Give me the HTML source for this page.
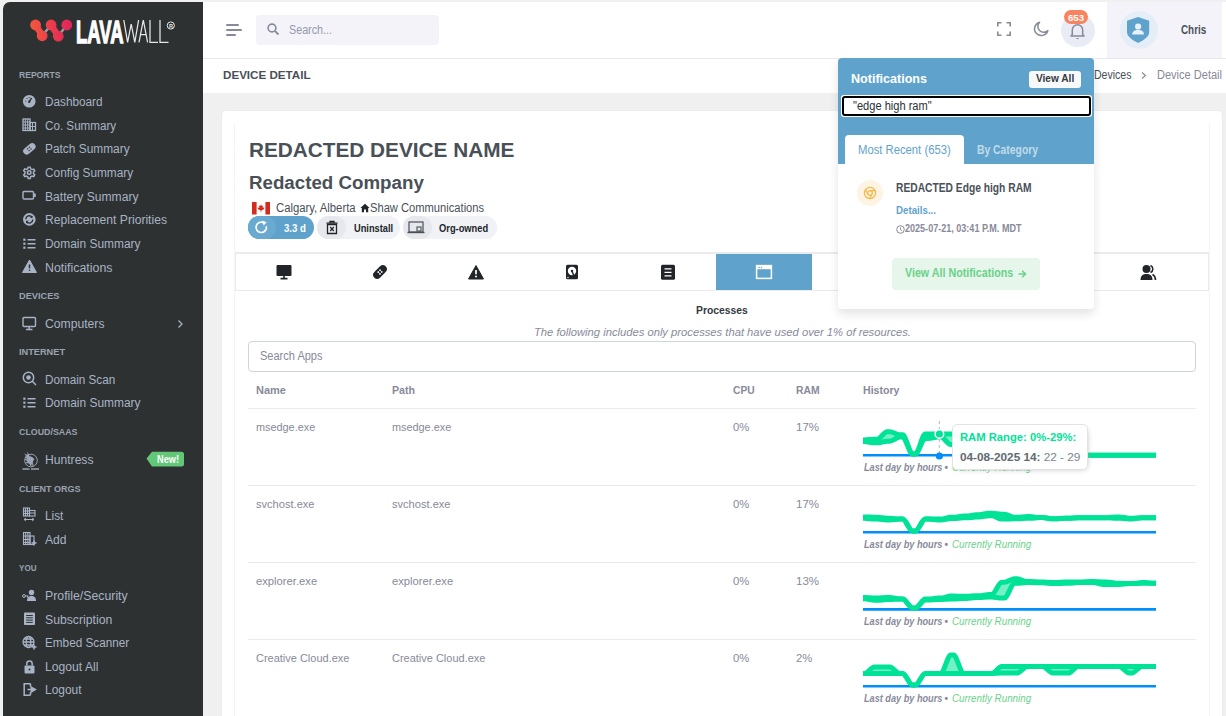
<!DOCTYPE html>
<html><head><meta charset="utf-8"><title>Device Detail</title>
<style>
html,body{margin:0;padding:0;}
body{width:1226px;height:716px;overflow:hidden;position:relative;background:#f1f1f1;font-family:"Liberation Sans", sans-serif;}
.b{position:absolute;box-sizing:border-box;}
.t{position:absolute;white-space:nowrap;}
svg.b{overflow:visible;}
</style></head><body>
<div class='b' style='left:3px;top:2px;width:200px;height:714px;background:#2d3131;border-top-left-radius:7px;'></div>
<svg class='b' style='left:28px;top:16px;' width='50' height='30' viewBox='0 0 50 30'>
<defs><linearGradient id="lg" gradientUnits="userSpaceOnUse" x1="2" x2="44" y1="0" y2="0"><stop offset="0" stop-color="#f4573c"/><stop offset="1" stop-color="#e0235c"/></linearGradient></defs>
<g stroke="#9aa0a3" stroke-width="2.4" fill="none"><path d="M14.2 19.6 L23.1 9 M30.3 20 L38.8 9"/></g>
<g stroke="url(#lg)" stroke-width="6.5" fill="none"><path d="M7.6 9 L14.2 19.6 M23.1 9 L30.3 20"/></g>
<g fill="url(#lg)">
<circle cx="7.6" cy="9" r="5.4"/><circle cx="14.2" cy="19.8" r="5.4"/><circle cx="23.1" cy="9" r="5.4"/><circle cx="30.3" cy="20.2" r="5.4"/><circle cx="38.8" cy="9" r="5.4"/>
</g></svg>
<div class='t' style='left:75.8px;top:17px;font-size:31.5px;line-height:31.5px;font-weight:700;font-style:normal;color:#ffffff;transform:scaleX(0.5859);transform-origin:0 0;-webkit-text-stroke:1.3px #ffffff;'>LAVA</div>
<svg class='b' style='left:123px;top:19px;' width='56' height='25' viewBox='0 0 56 25'><g stroke="#e8e8e8" stroke-width="1.25" fill="none" stroke-linejoin="miter">
<path d="M0.8 1 L4.6 23.4 L8.2 5 L11.8 23.4 L15.6 1"/>
<path d="M16 23.4 L20.3 1 L24.6 23.4 M17.6 15.5 H23"/>
<path d="M27 1 V23.4 H35"/>
<path d="M37 1 V23.4 H45.5"/>
</g><circle cx="47.8" cy="6.5" r="3.6" stroke="#e8e8e8" stroke-width="1" fill="none"/><text x="46.1" y="8.6" font-size="5.5" font-weight="700" fill="#e8e8e8" font-family="Liberation Sans">R</text></svg>
<div class='t' style='left:19.2px;top:71px;font-size:9px;line-height:9px;font-weight:700;font-style:normal;color:#9aa3b2;transform:scaleX(0.9514);transform-origin:0 0;'>REPORTS</div>
<div class='t' style='left:44.8px;top:96px;font-size:12px;line-height:12px;font-weight:400;font-style:normal;color:#a9b3c6;transform:scaleX(0.9809);transform-origin:0 0;'>Dashboard</div>
<svg class='b' style='left:22px;top:93.5px;' width='15' height='15' viewBox='0 0 15 15'><circle cx="7.2" cy="7.3" r="6.3" fill="#a9b3c6"/><path d="M7.2 7.6 L9.6 4" stroke="#2d3131" stroke-width="1.4"/><circle cx="7.2" cy="7.8" r="1.2" fill="#2d3131"/><g fill="#2d3131"><circle cx="3.8" cy="7" r=".6"/><circle cx="5" cy="4.5" r=".6"/><circle cx="7.2" cy="3.5" r=".6"/></g></svg>
<div class='t' style='left:44.8px;top:120px;font-size:12px;line-height:12px;font-weight:400;font-style:normal;color:#a9b3c6;transform:scaleX(0.9706);transform-origin:0 0;'>Co. Summary</div>
<svg class='b' style='left:22px;top:117.19999999999999px;' width='15' height='15' viewBox='0 0 15 15'><g fill="none" stroke="#a9b3c6" stroke-width="1.3"><rect x="1" y="2" width="7" height="11.5"/><rect x="8" y="5.5" width="5.5" height="8"/></g><g stroke="#a9b3c6" stroke-width="1"><path d="M3.3 2v11.5M5.7 2v11.5M1 5h7M1 8h7M1 11h7M10.5 5.5v8M8 9.5h5.5"/></g></svg>
<div class='t' style='left:44.8px;top:143px;font-size:12px;line-height:12px;font-weight:400;font-style:normal;color:#a9b3c6;transform:scaleX(0.9911);transform-origin:0 0;'>Patch Summary</div>
<svg class='b' style='left:22px;top:140.9px;' width='15' height='15' viewBox='0 0 15 15'><g transform="rotate(-40 7.5 8)"><rect x="0.5" y="4.3" width="14" height="7" rx="3.5" fill="#a9b3c6"/><g fill="#2d3131"><circle cx="6.2" cy="6.6" r=".7"/><circle cx="8.6" cy="6.6" r=".7"/><circle cx="6.2" cy="9" r=".7"/><circle cx="8.6" cy="9" r=".7"/></g></g></svg>
<div class='t' style='left:44.8px;top:167px;font-size:12px;line-height:12px;font-weight:400;font-style:normal;color:#a9b3c6;transform:scaleX(0.9869);transform-origin:0 0;'>Config Summary</div>
<svg class='b' style='left:22px;top:164.6px;' width='15' height='15' viewBox='0 0 15 15'><g transform="translate(1.1 1.1) scale(0.85)"><g fill="none" stroke="#a9b3c6" stroke-width="1.7"><circle cx="7.2" cy="7.5" r="2.1"/><path d="M6 1.2h2.4l.5 2 1.6.9 2-.6 1.2 2.1-1.5 1.4v1.8l1.5 1.4-1.2 2.1-2-.6-1.6.9-.5 2H6l-.5-2-1.6-.9-2 .6-1.2-2.1 1.5-1.4V6.8L.7 5.4 1.9 3.3l2 .6 1.6-.9z"/></g></g></svg>
<div class='t' style='left:44.8px;top:191px;font-size:12px;line-height:12px;font-weight:400;font-style:normal;color:#a9b3c6;transform:scaleX(1.0086);transform-origin:0 0;'>Battery Summary</div>
<svg class='b' style='left:22px;top:188.4px;' width='15' height='15' viewBox='0 0 15 15'><g fill="none" stroke="#a9b3c6" stroke-width="1.4"><rect x="1" y="3.5" width="10.5" height="7.5" rx="1"/></g><rect x="11.8" y="5.6" width="2" height="3.3" fill="#a9b3c6"/></svg>
<div class='t' style='left:44.8px;top:214px;font-size:12px;line-height:12px;font-weight:400;font-style:normal;color:#a9b3c6;transform:scaleX(1.0106);transform-origin:0 0;'>Replacement Priorities</div>
<svg class='b' style='left:22px;top:211.8px;' width='15' height='15' viewBox='0 0 15 15'><circle cx="7.3" cy="7.4" r="6.3" fill="#a9b3c6"/><g fill="none" stroke="#2d3131" stroke-width="1.4"><path d="M3.8 7.2a3.5 3.5 0 0 1 6.2-2.2M10.8 7.6a3.5 3.5 0 0 1-6.2 2.2"/></g><path d="M10.6 3.4v2.6H8z M4 11.4V8.8h2.6z" fill="#2d3131"/></svg>
<div class='t' style='left:44.8px;top:238px;font-size:12px;line-height:12px;font-weight:400;font-style:normal;color:#a9b3c6;transform:scaleX(0.9945);transform-origin:0 0;'>Domain Summary</div>
<svg class='b' style='left:22px;top:235.7px;' width='15' height='15' viewBox='0 0 15 15'><g fill="#a9b3c6"><rect x="1.3" y="2.6" width="2.2" height="2.2"/><rect x="1.3" y="6.6" width="2.2" height="2.2"/><rect x="1.3" y="10.6" width="2.2" height="2.2"/></g><g stroke="#a9b3c6" stroke-width="1.4"><path d="M5.5 3.7h8M5.5 7.7h8M5.5 11.7h8"/></g></svg>
<div class='t' style='left:44.8px;top:262px;font-size:12px;line-height:12px;font-weight:400;font-style:normal;color:#a9b3c6;transform:scaleX(1.0325);transform-origin:0 0;'>Notifications</div>
<svg class='b' style='left:22px;top:259.3px;' width='15' height='15' viewBox='0 0 15 15'><path d="M7.5 1 L14.5 13.5 H0.5Z" fill="#a9b3c6" stroke="#a9b3c6" stroke-width="1" stroke-linejoin="round"/><path d="M7.5 5.5v3.8" stroke="#2d3131" stroke-width="1.5"/><circle cx="7.5" cy="11.3" r=".8" fill="#2d3131"/></svg>
<div class='t' style='left:19.2px;top:292px;font-size:9px;line-height:9px;font-weight:700;font-style:normal;color:#9aa3b2;transform:scaleX(1.0249);transform-origin:0 0;'>DEVICES</div>
<div class='t' style='left:44.8px;top:318px;font-size:12px;line-height:12px;font-weight:400;font-style:normal;color:#a9b3c6;transform:scaleX(1.0138);transform-origin:0 0;'>Computers</div>
<svg class='b' style='left:22px;top:315.5px;' width='15' height='15' viewBox='0 0 15 15'><g fill="none" stroke="#a9b3c6" stroke-width="1.4"><rect x="1" y="1.5" width="12.5" height="9" rx="1"/></g><path d="M7.2 10.5v2.5M4 13.5h6.5" stroke="#a9b3c6" stroke-width="1.5"/></svg>
<svg class='b' style='left:176px;top:319px;' width='8' height='10' viewBox='0 0 8 10'><path d="M2.5 1.5 L6 5 L2.5 8.5" fill="none" stroke="#a9b3c6" stroke-width="1.3"/></svg>
<div class='t' style='left:19.2px;top:348px;font-size:9px;line-height:9px;font-weight:700;font-style:normal;color:#9aa3b2;transform:scaleX(1.0222);transform-origin:0 0;'>INTERNET</div>
<div class='t' style='left:44.8px;top:374px;font-size:12px;line-height:12px;font-weight:400;font-style:normal;color:#a9b3c6;transform:scaleX(0.9744);transform-origin:0 0;'>Domain Scan</div>
<svg class='b' style='left:22px;top:371.1px;' width='15' height='15' viewBox='0 0 15 15'><g fill="none" stroke="#a9b3c6" stroke-width="1.5"><circle cx="6.5" cy="6.5" r="5.2"/><path d="M10.3 10.3 L14 14"/></g><circle cx="6.5" cy="6.5" r="2.3" fill="#a9b3c6"/></svg>
<div class='t' style='left:44.8px;top:397px;font-size:12px;line-height:12px;font-weight:400;font-style:normal;color:#a9b3c6;transform:scaleX(0.9945);transform-origin:0 0;'>Domain Summary</div>
<svg class='b' style='left:22px;top:394.7px;' width='15' height='15' viewBox='0 0 15 15'><g fill="#a9b3c6"><rect x="1.3" y="2.6" width="2.2" height="2.2"/><rect x="1.3" y="6.6" width="2.2" height="2.2"/><rect x="1.3" y="10.6" width="2.2" height="2.2"/></g><g stroke="#a9b3c6" stroke-width="1.4"><path d="M5.5 3.7h8M5.5 7.7h8M5.5 11.7h8"/></g></svg>
<div class='t' style='left:19.2px;top:428px;font-size:9px;line-height:9px;font-weight:700;font-style:normal;color:#9aa3b2;transform:scaleX(0.9829);transform-origin:0 0;'>CLOUD/SAAS</div>
<div class='t' style='left:44.8px;top:454px;font-size:12px;line-height:12px;font-weight:400;font-style:normal;color:#a9b3c6;transform:scaleX(1.0098);transform-origin:0 0;'>Huntress</div>
<svg class='b' style='left:21.5px;top:451px;' width='18' height='20' viewBox='0 0 18 20'><circle cx="9" cy="9.5" r="6.3" fill="none" stroke="#a9b3c6" stroke-width="1" opacity="0.85"/><path d="M2 2.5 L5 6 L2.5 5.5 L5 8 L2 8.5 L5.5 10 L3.5 12 L7 12.5 L9 15.5 L10.5 11 L12.5 8 L10 6 L7.5 5 L5.5 0.5 L5.5 4Z" fill="#a9b3c6" opacity="0.9"/><path d="M9.5 6 L11 15" stroke="#a9b3c6" stroke-width="1.2" opacity="0.8"/><rect x="0.5" y="17" width="7" height="2" fill="#a9b3c6" opacity="0.65"/><rect x="9" y="17" width="8" height="2" fill="#a9b3c6" opacity="0.65"/></svg>
<svg class='b' style='left:146px;top:451px;' width='38' height='16' viewBox='0 0 38 16'><path d="M0.5 7.5 L6 0.8 H35.5 a2.5 2.5 0 0 1 2.5 2.5 V13 a2.5 2.5 0 0 1 -2.5 2.5 H6Z" fill="#62c878"/></svg>
<div class='t' style='left:156.5px;top:455px;font-size:10px;line-height:10px;font-weight:700;font-style:normal;color:#ffffff;transform:scaleX(0.9203);transform-origin:0 0;'>New!</div>
<div class='t' style='left:19.2px;top:485px;font-size:9px;line-height:9px;font-weight:700;font-style:normal;color:#9aa3b2;transform:scaleX(0.9997);transform-origin:0 0;'>CLIENT ORGS</div>
<div class='t' style='left:44.8px;top:510px;font-size:12px;line-height:12px;font-weight:400;font-style:normal;color:#a9b3c6;transform:scaleX(0.9846);transform-origin:0 0;'>List</div>
<svg class='b' style='left:22px;top:507.1px;' width='15' height='15' viewBox='0 0 15 15'><g fill="none" stroke="#a9b3c6" stroke-width="1.1"><rect x="1.5" y="1" width="6" height="8"/><rect x="7.5" y="3.5" width="5.5" height="5.5"/><path d="M3.5 1v8M5.5 1v8M1.5 4h6M1.5 6.5h6M7.5 6h5.5"/></g><path d="M2 12.5h10M2 12.5l1.8-1.3M2 12.5l1.8 1.3M12 12.5l-1.8-1.3M12 12.5l-1.8 1.3" stroke="#a9b3c6" stroke-width="1"/></svg>
<div class='t' style='left:44.8px;top:534px;font-size:12px;line-height:12px;font-weight:400;font-style:normal;color:#a9b3c6;transform:scaleX(1.0066);transform-origin:0 0;'>Add</div>
<svg class='b' style='left:22px;top:531.2px;' width='15' height='15' viewBox='0 0 15 15'><g fill="none" stroke="#a9b3c6" stroke-width="1.1"><rect x="1.5" y="1.5" width="6.5" height="12"/><rect x="8" y="5" width="4" height="8.5"/><path d="M3.7 1.5v12M5.9 1.5v12M1.5 5h6.5M1.5 8.5h6.5M1.5 11.5h6.5"/></g><path d="M12 9.5v5M9.5 12h5" stroke="#a9b3c6" stroke-width="1.5"/></svg>
<div class='t' style='left:19.2px;top:564px;font-size:9px;line-height:9px;font-weight:700;font-style:normal;color:#9aa3b2;transform:scaleX(0.8967);transform-origin:0 0;'>YOU</div>
<div class='t' style='left:44.8px;top:590px;font-size:12px;line-height:12px;font-weight:400;font-style:normal;color:#a9b3c6;transform:scaleX(1.0247);transform-origin:0 0;'>Profile/Security</div>
<svg class='b' style='left:22px;top:587.6px;' width='15' height='15' viewBox='0 0 15 15'><circle cx="9.5" cy="4.5" r="2.7" fill="#a9b3c6"/><path d="M5 13 C5 9 7 8 9.5 8 C12 8 14 9 14 13Z" fill="#a9b3c6"/><circle cx="2" cy="8" r="1.4" fill="none" stroke="#a9b3c6" stroke-width="1"/><path d="M3.4 8 H6.5 M5.5 8v1.5" stroke="#a9b3c6" stroke-width="1"/></svg>
<div class='t' style='left:44.8px;top:614px;font-size:12px;line-height:12px;font-weight:400;font-style:normal;color:#a9b3c6;transform:scaleX(1.0190);transform-origin:0 0;'>Subscription</div>
<svg class='b' style='left:22px;top:611.1px;' width='15' height='15' viewBox='0 0 15 15'><rect x="2" y="1.5" width="11" height="12.5" rx=".8" fill="#a9b3c6"/><g stroke="#2d3131" stroke-width="1"><path d="M4.2 4.5h6.6M4.2 6.8h6.6M4.2 9.1h6.6M4.2 11.4h6.6"/></g></svg>
<div class='t' style='left:44.8px;top:637px;font-size:12px;line-height:12px;font-weight:400;font-style:normal;color:#a9b3c6;transform:scaleX(0.9784);transform-origin:0 0;'>Embed Scanner</div>
<svg class='b' style='left:22px;top:634.8px;' width='15' height='15' viewBox='0 0 15 15'><g fill="none" stroke="#a9b3c6" stroke-width="1.3"><circle cx="6.5" cy="7" r="5.5"/><ellipse cx="6.5" cy="7" rx="2.3" ry="5.5"/><path d="M1 7h11M2 4h9M2 10h9"/></g><path d="M12 9.5v5M9.5 12h5" stroke="#a9b3c6" stroke-width="1.6"/></svg>
<div class='t' style='left:44.8px;top:661px;font-size:12px;line-height:12px;font-weight:400;font-style:normal;color:#a9b3c6;transform:scaleX(1.0129);transform-origin:0 0;'>Logout All</div>
<svg class='b' style='left:22px;top:658.5px;' width='15' height='15' viewBox='0 0 15 15'><rect x="2.5" y="6.5" width="10" height="8" rx="1" fill="#a9b3c6"/><path d="M4.8 6.5V4.7a2.7 2.7 0 0 1 5.4 0v1.8" fill="none" stroke="#a9b3c6" stroke-width="1.5"/><circle cx="7.5" cy="10.5" r="1" fill="#2d3131"/></svg>
<div class='t' style='left:44.8px;top:684px;font-size:12px;line-height:12px;font-weight:400;font-style:normal;color:#a9b3c6;transform:scaleX(0.9945);transform-origin:0 0;'>Logout</div>
<svg class='b' style='left:22px;top:682.0px;' width='15' height='15' viewBox='0 0 15 15'><path d="M8.5 1.8H2.2v11.4h6.3" fill="none" stroke="#a9b3c6" stroke-width="1.5"/><path d="M8.5 1.8v3M8.5 10v3" stroke="#a9b3c6" stroke-width="1.5"/><path d="M5.5 7.5h5M9.2 5 L13.5 7.5 L9.2 10Z" stroke="#a9b3c6" stroke-width="1.4" fill="#a9b3c6"/></svg>
<div class='b' style='left:203px;top:2px;width:1023px;height:57px;background:#ffffff;border-bottom:1px solid #e9ebec;'></div>
<div class='b' style='left:203px;top:0px;width:1023px;height:2px;background:#f0f0f0;'></div>
<div class='b' style='left:226px;top:24px;width:13px;height:2px;background:#878a99;border-radius:1px;'></div>
<div class='b' style='left:226px;top:29px;width:16px;height:2px;background:#878a99;border-radius:1px;'></div>
<div class='b' style='left:226px;top:34px;width:10px;height:2px;background:#878a99;border-radius:1px;'></div>
<div class='b' style='left:256px;top:15px;width:183px;height:30px;background:#f3f3f9;border-radius:4px;'></div>
<svg class='b' style='left:267px;top:23px;' width='13' height='13' viewBox='0 0 13 13'><circle cx="5" cy="5" r="3.9" fill="none" stroke="#878a99" stroke-width="1.6"/><path d="M7.8 7.8 L11.5 11.5" stroke="#878a99" stroke-width="1.8"/></svg>
<div class='t' style='left:288.6px;top:24px;font-size:12px;line-height:12px;font-weight:400;font-style:normal;color:#9599ad;transform:scaleX(0.8953);transform-origin:0 0;'>Search...</div>
<svg class='b' style='left:996px;top:21px;' width='16' height='16' viewBox='0 0 16 16'><path d="M1.8 5.5V1.8h3.7M10.5 1.8h3.7v3.7M14.2 10.5v3.7h-3.7M5.5 14.2H1.8v-3.7" fill="none" stroke="#878a99" stroke-width="1.6"/></svg>
<svg class='b' style='left:1032px;top:20px;' width='18' height='18' viewBox='0 0 18 18'><path d="M7.6 2.2 A6.8 6.8 0 1 0 15.9 10.6 A5.6 5.6 0 0 1 7.6 2.2Z" fill="none" stroke="#878a99" stroke-width="1.5" stroke-linejoin="round"/></svg>
<div class='b' style='left:1061px;top:13.5px;width:33.5px;height:33.5px;background:#e9ebf5;border-radius:50%;'></div>
<svg class='b' style='left:1069px;top:22px;' width='17' height='18' viewBox='0 0 17 18'><path d="M3.3 12.5 V8 a5.2 5.2 0 0 1 10.4 0 V12.5 L15 14 H2Z" fill="none" stroke="#878a99" stroke-width="1.5" stroke-linejoin="round"/><path d="M6.8 16 h3.4 L8.5 17.3Z" fill="#878a99"/></svg>
<div class='b' style='left:1063.5px;top:10px;width:24.5px;height:14.3px;background:#f7845e;border-radius:8px;'></div>
<div class='t' style='left:1067.8px;top:14px;font-size:9px;line-height:9px;font-weight:700;font-style:normal;color:#ffffff;transform:scaleX(1.0644);transform-origin:0 0;'>653</div>
<div class='b' style='left:1107px;top:2px;width:115px;height:56px;background:#f3f3f9;'></div>
<div class='b' style='left:1120px;top:11px;width:38px;height:38px;background:#e5eef7;border-radius:50%;'></div>
<svg class='b' style='left:1127px;top:16px;' width='24' height='28' viewBox='0 0 24 28'><path d="M11.1 1 L22.2 4.8 V16 C22.2 20.5 17 24 11.1 27 C5.2 24 0 20.5 0 16 V4.8Z" fill="#5fa3cc"/><circle cx="11.1" cy="10.5" r="3.1" fill="#e8f1f8"/><path d="M5.2 18.5 C5.2 15.2 7.8 14 11.1 14 C14.4 14 17 15.2 17 18.5Z" fill="#e8f1f8"/></svg>
<div class='t' style='left:1180.7px;top:24px;font-size:12.5px;line-height:12.5px;font-weight:700;font-style:normal;color:#495057;transform:scaleX(0.7887);transform-origin:0 0;'>Chris</div>
<div class='b' style='left:203px;top:59px;width:1023px;height:34px;background:#ffffff;box-shadow:0 1px 2px rgba(56,65,74,0.15);'></div>
<div class='t' style='left:222.6px;top:70px;font-size:11.5px;line-height:11.5px;font-weight:700;font-style:normal;color:#495057;transform:scaleX(1.0094);transform-origin:0 0;'>DEVICE DETAIL</div>
<div class='t' style='left:1093.5px;top:69px;font-size:12px;line-height:12px;font-weight:400;font-style:normal;color:#495057;transform:scaleX(0.8785);transform-origin:0 0;'>Devices</div>
<svg class='b' style='left:1140px;top:71px;' width='8' height='9' viewBox='0 0 8 9'><path d="M2 1.5 L5.5 4.5 L2 7.5" fill="none" stroke="#878a99" stroke-width="1.1"/></svg>
<div class='t' style='left:1156.8px;top:69px;font-size:12px;line-height:12px;font-weight:400;font-style:normal;color:#878a99;transform:scaleX(0.9193);transform-origin:0 0;'>Device Detail</div>
<div class='b' style='left:203px;top:93px;width:1023px;height:623px;background:#f0f0f0;'></div>
<div class='b' style='left:222px;top:111px;width:1000px;height:629px;background:#ffffff;border-radius:4px;box-shadow:0 0 1.5px rgba(56,65,74,0.10);'></div>
<div class='b' style='left:234px;top:123px;width:976px;height:617px;border:1px solid #f3f4f5;border-top:none;border-bottom:none;'></div>
<div class='t' style='left:249.0px;top:140px;font-size:20px;line-height:20px;font-weight:700;font-style:normal;color:#495057;transform:scaleX(1.0380);transform-origin:0 0;'>REDACTED DEVICE NAME</div>
<div class='t' style='left:249.0px;top:174px;font-size:18px;line-height:18px;font-weight:700;font-style:normal;color:#495057;transform:scaleX(1.0402);transform-origin:0 0;'>Redacted Company</div>
<svg class='b' style='left:252px;top:202px;' width='18' height='13' viewBox='0 0 18 13'><rect width="18" height="12.5" fill="#ffffff"/><rect width="4.6" height="12.5" fill="#d52b1e"/><rect x="13.4" width="4.6" height="12.5" fill="#d52b1e"/><path d="M9 2.3 L9.8 4 L11 3.6 L10.6 6 L12 5.2 L12.3 6.2 L11.5 7.6 L9.3 8.4 V10.3 H8.7 V8.4 L6.5 7.6 L5.7 6.2 L6 5.2 L7.4 6 L7 3.6 L8.2 4Z" fill="#d52b1e"/></svg>
<div class='t' style='left:276.0px;top:202px;font-size:12px;line-height:12px;font-weight:400;font-style:normal;color:#495057;transform:scaleX(0.9420);transform-origin:0 0;'>Calgary, Alberta</div>
<svg class='b' style='left:359.5px;top:203px;' width='10' height='10' viewBox='0 0 10 10'><path d="M5 0.8 L9.6 5 H8.2 V9.2 H6 V6.6 H4 V9.2 H1.8 V5 H0.4Z" fill="#212529"/></svg>
<div class='t' style='left:369.8px;top:202px;font-size:12px;line-height:12px;font-weight:400;font-style:normal;color:#495057;transform:scaleX(0.9298);transform-origin:0 0;'>Shaw Communications</div>
<div class='b' style='left:248px;top:216px;width:66px;height:23px;background:#5fa3cc;border-radius:12px;'></div>
<div class='b' style='left:248px;top:216px;width:28px;height:23px;background:#6aaad1;border-radius:12px;'></div>
<svg class='b' style='left:254px;top:220px;' width='15' height='15' viewBox='0 0 15 15'><path d="M12.3 6.2 A5.2 5.2 0 1 1 9.8 2.8" fill="none" stroke="#ffffff" stroke-width="1.7"/><path d="M8.3 0.6 L12.6 2.2 L9.6 5.6Z" fill="#ffffff"/></svg>
<div class='t' style='left:284.0px;top:223px;font-size:10.5px;line-height:10.5px;font-weight:700;font-style:normal;color:#ffffff;transform:scaleX(0.9191);transform-origin:0 0;'>3.3 d</div>
<div class='b' style='left:317px;top:216px;width:83px;height:23px;background:#f0f2f6;border-radius:12px;'></div>
<div class='b' style='left:317px;top:216px;width:29px;height:23px;background:#e6e8ed;border-radius:12px;'></div>
<svg class='b' style='left:325px;top:220px;' width='14' height='15' viewBox='0 0 14 15'><path d="M2.5 4.5 H11.5 V13.5 H2.5Z" fill="none" stroke="#212529" stroke-width="1.3"/><path d="M1.5 3.2 H12.5 M5 3 V1.5 H9 V3" fill="none" stroke="#212529" stroke-width="1.3"/><path d="M5.2 7 L8.8 11 M8.8 7 L5.2 11" stroke="#212529" stroke-width="1.2"/></svg>
<div class='t' style='left:353.5px;top:223px;font-size:10.5px;line-height:10.5px;font-weight:700;font-style:normal;color:#212529;transform:scaleX(0.8840);transform-origin:0 0;'>Uninstall</div>
<div class='b' style='left:403px;top:216px;width:94px;height:23px;background:#f0f2f6;border-radius:12px;'></div>
<div class='b' style='left:403px;top:216px;width:29px;height:23px;background:#e6e8ed;border-radius:12px;'></div>
<svg class='b' style='left:407px;top:220px;' width='18' height='15' viewBox='0 0 18 15'><rect x="2" y="2" width="14" height="10" fill="none" stroke="#495057" stroke-width="1.2"/><path d="M0.5 12.5 H17.5" stroke="#495057" stroke-width="1.4"/><rect x="10" y="7" width="4" height="4" fill="none" stroke="#495057" stroke-width="1.1"/></svg>
<div class='t' style='left:439.4px;top:223px;font-size:10.5px;line-height:10.5px;font-weight:700;font-style:normal;color:#212529;transform:scaleX(0.8877);transform-origin:0 0;'>Org-owned</div>
<div class='b' style='left:235px;top:252px;width:974px;height:39px;border:1px solid #e9ebec;border-top:2px solid #e9ebec;'></div>
<div class='b' style='left:716px;top:254px;width:96px;height:36px;background:#5fa3cc;'></div>
<svg class='b' style='left:275.3px;top:263.5px;' width='18' height='16' viewBox='0 0 18 16'><rect x="1.5" y="1" width="15" height="11" rx="1" fill="#212529"/><path d="M9 12 V14.2 M5.5 14.6 H12.5" stroke="#212529" stroke-width="1.6"/></svg>
<svg class='b' style='left:371.0px;top:263.5px;' width='18' height='16' viewBox='0 0 18 16'><g transform="rotate(-45 9 8)"><rect x="1" y="4" width="16" height="8" rx="4" fill="#212529"/><g fill="#fff"><circle cx="7.7" cy="6.8" r=".9"/><circle cx="10.3" cy="6.8" r=".9"/><circle cx="7.7" cy="9.2" r=".9"/><circle cx="10.3" cy="9.2" r=".9"/></g></g></svg>
<svg class='b' style='left:467.0px;top:263.5px;' width='18' height='16' viewBox='0 0 18 16'><path d="M9 1.5 L16.5 15 H1.5Z" fill="#212529" stroke="#212529" stroke-width="1" stroke-linejoin="round"/><path d="M9 6 V10.3" stroke="#fff" stroke-width="1.7"/><circle cx="9" cy="12.5" r="1" fill="#fff"/></svg>
<svg class='b' style='left:563.0px;top:263.5px;' width='18' height='16' viewBox='0 0 18 16'><rect x="3" y="0.8" width="12" height="14.5" rx="1.5" fill="#212529"/><circle cx="9" cy="7" r="4.2" fill="#fff"/><circle cx="9" cy="7" r="1.2" fill="#212529"/><path d="M9.2 7.5 L11 12.5" stroke="#212529" stroke-width="1.4"/><circle cx="5" cy="13.5" r=".7" fill="#fff"/></svg>
<svg class='b' style='left:659.0px;top:263.5px;' width='18' height='16' viewBox='0 0 18 16'><rect x="2" y="0.8" width="14" height="15" rx="1.5" fill="#212529"/><path d="M5.5 4.8 H12.5 M5.5 8.3 H12.5 M5.5 11.8 H12.5" stroke="#fff" stroke-width="1.3"/></svg>
<svg class='b' style='left:755.3px;top:263.5px;' width='18' height='16' viewBox='0 0 18 16'><rect x="1.6" y="1.6" width="14.8" height="12.8" fill="none" stroke="#fff" stroke-width="1.5"/><rect x="1.6" y="1.6" width="14.8" height="3.6" fill="#fff"/><circle cx="4.2" cy="3.4" r=".75" fill="#5fa3cc"/><circle cx="6.5" cy="3.4" r=".75" fill="#5fa3cc"/></svg>
<svg class='b' style='left:1139.3px;top:263.5px;' width='18' height='16' viewBox='0 0 18 16'><circle cx="7.5" cy="5" r="4" fill="#212529"/><path d="M1.5 16 C1.5 11.5 4 10 7.5 10 C11 10 13.5 11.5 13.5 16Z" fill="#212529"/><path d="M11.5 1.6 A3.8 3.8 0 0 1 11.5 8.6" fill="none" stroke="#212529" stroke-width="1.6"/><path d="M13.5 10.5 C15.5 11.5 16.5 13 16.5 16" fill="none" stroke="#212529" stroke-width="1.6"/></svg>
<div class='t' style='left:696.3px;top:305px;font-size:11.5px;line-height:11.5px;font-weight:700;font-style:normal;color:#343a40;transform:scaleX(0.9001);transform-origin:0 0;'>Processes</div>
<div class='t' style='left:533.9px;top:327px;font-size:11px;line-height:11px;font-weight:400;font-style:italic;color:#878a99;transform:scaleX(1.0191);transform-origin:0 0;'>The following includes only processes that have used over 1% of resources.</div>
<div class='b' style='left:248px;top:341px;width:948px;height:31px;border:1px solid #ced4da;border-radius:4px;'></div>
<div class='t' style='left:260.4px;top:350px;font-size:12px;line-height:12px;font-weight:400;font-style:normal;color:#878a99;transform:scaleX(0.9185);transform-origin:0 0;'>Search Apps</div>
<div class='t' style='left:255.8px;top:385px;font-size:11.5px;line-height:11.5px;font-weight:700;font-style:normal;color:#878a99;transform:scaleX(0.9544);transform-origin:0 0;'>Name</div>
<div class='t' style='left:392.0px;top:385px;font-size:11.5px;line-height:11.5px;font-weight:700;font-style:normal;color:#878a99;transform:scaleX(0.9229);transform-origin:0 0;'>Path</div>
<div class='t' style='left:732.5px;top:385px;font-size:11.5px;line-height:11.5px;font-weight:700;font-style:normal;color:#878a99;transform:scaleX(0.8896);transform-origin:0 0;'>CPU</div>
<div class='t' style='left:796.3px;top:385px;font-size:11.5px;line-height:11.5px;font-weight:700;font-style:normal;color:#878a99;transform:scaleX(0.9007);transform-origin:0 0;'>RAM</div>
<div class='t' style='left:863.4px;top:385px;font-size:11.5px;line-height:11.5px;font-weight:700;font-style:normal;color:#878a99;transform:scaleX(0.9211);transform-origin:0 0;'>History</div>
<div class='b' style='left:248px;top:408px;width:948px;height:1px;background:#e9ebec;'></div>
<div class='t' style='left:255.8px;top:422px;font-size:11.5px;line-height:11.5px;font-weight:400;font-style:normal;color:#878a99;transform:scaleX(0.9448);transform-origin:0 0;'>msedge.exe</div>
<div class='t' style='left:392.0px;top:422px;font-size:11.5px;line-height:11.5px;font-weight:400;font-style:normal;color:#878a99;transform:scaleX(0.9448);transform-origin:0 0;'>msedge.exe</div>
<div class='t' style='left:732.5px;top:422px;font-size:11.5px;line-height:11.5px;font-weight:400;font-style:normal;color:#878a99;transform:scaleX(0.9805);transform-origin:0 0;'>0%</div>
<div class='t' style='left:796.3px;top:422px;font-size:11.5px;line-height:11.5px;font-weight:400;font-style:normal;color:#878a99;transform:scaleX(1.0030);transform-origin:0 0;'>17%</div>
<div class='b' style='left:248px;top:485px;width:948px;height:1px;background:#e9ebec;'></div>
<div class='t' style='left:864.3px;top:463px;font-size:10px;line-height:10px;font-weight:700;font-style:italic;color:#878a99;transform:scaleX(0.9150);transform-origin:0 0;'>Last day by hours</div>
<div class='t' style='left:944.5px;top:463px;font-size:10px;line-height:10px;font-weight:700;font-style:normal;color:#878a99;'>•</div>
<div class='t' style='left:951.8px;top:463px;font-size:10px;line-height:10px;font-weight:400;font-style:italic;color:#6ad28a;transform:scaleX(0.9825);transform-origin:0 0;'>Currently Running</div>
<div class='t' style='left:255.8px;top:499px;font-size:11.5px;line-height:11.5px;font-weight:400;font-style:normal;color:#878a99;transform:scaleX(0.9632);transform-origin:0 0;'>svchost.exe</div>
<div class='t' style='left:392.0px;top:499px;font-size:11.5px;line-height:11.5px;font-weight:400;font-style:normal;color:#878a99;transform:scaleX(0.9632);transform-origin:0 0;'>svchost.exe</div>
<div class='t' style='left:732.5px;top:499px;font-size:11.5px;line-height:11.5px;font-weight:400;font-style:normal;color:#878a99;transform:scaleX(0.9805);transform-origin:0 0;'>0%</div>
<div class='t' style='left:796.3px;top:499px;font-size:11.5px;line-height:11.5px;font-weight:400;font-style:normal;color:#878a99;transform:scaleX(1.0030);transform-origin:0 0;'>17%</div>
<div class='b' style='left:248px;top:562px;width:948px;height:1px;background:#e9ebec;'></div>
<div class='t' style='left:864.3px;top:540px;font-size:10px;line-height:10px;font-weight:700;font-style:italic;color:#878a99;transform:scaleX(0.9150);transform-origin:0 0;'>Last day by hours</div>
<div class='t' style='left:944.5px;top:540px;font-size:10px;line-height:10px;font-weight:700;font-style:normal;color:#878a99;'>•</div>
<div class='t' style='left:951.8px;top:540px;font-size:10px;line-height:10px;font-weight:400;font-style:italic;color:#6ad28a;transform:scaleX(0.9825);transform-origin:0 0;'>Currently Running</div>
<div class='t' style='left:255.8px;top:576px;font-size:11.5px;line-height:11.5px;font-weight:400;font-style:normal;color:#878a99;transform:scaleX(0.9768);transform-origin:0 0;'>explorer.exe</div>
<div class='t' style='left:392.0px;top:576px;font-size:11.5px;line-height:11.5px;font-weight:400;font-style:normal;color:#878a99;transform:scaleX(0.9768);transform-origin:0 0;'>explorer.exe</div>
<div class='t' style='left:732.5px;top:576px;font-size:11.5px;line-height:11.5px;font-weight:400;font-style:normal;color:#878a99;transform:scaleX(0.9805);transform-origin:0 0;'>0%</div>
<div class='t' style='left:796.3px;top:576px;font-size:11.5px;line-height:11.5px;font-weight:400;font-style:normal;color:#878a99;transform:scaleX(1.0030);transform-origin:0 0;'>13%</div>
<div class='b' style='left:248px;top:639px;width:948px;height:1px;background:#e9ebec;'></div>
<div class='t' style='left:864.3px;top:617px;font-size:10px;line-height:10px;font-weight:700;font-style:italic;color:#878a99;transform:scaleX(0.9150);transform-origin:0 0;'>Last day by hours</div>
<div class='t' style='left:944.5px;top:617px;font-size:10px;line-height:10px;font-weight:700;font-style:normal;color:#878a99;'>•</div>
<div class='t' style='left:951.8px;top:617px;font-size:10px;line-height:10px;font-weight:400;font-style:italic;color:#6ad28a;transform:scaleX(0.9825);transform-origin:0 0;'>Currently Running</div>
<div class='t' style='left:255.8px;top:653px;font-size:11.5px;line-height:11.5px;font-weight:400;font-style:normal;color:#878a99;transform:scaleX(0.9549);transform-origin:0 0;'>Creative Cloud.exe</div>
<div class='t' style='left:392.0px;top:653px;font-size:11.5px;line-height:11.5px;font-weight:400;font-style:normal;color:#878a99;transform:scaleX(0.9549);transform-origin:0 0;'>Creative Cloud.exe</div>
<div class='t' style='left:732.5px;top:653px;font-size:11.5px;line-height:11.5px;font-weight:400;font-style:normal;color:#878a99;transform:scaleX(0.9805);transform-origin:0 0;'>0%</div>
<div class='t' style='left:796.3px;top:653px;font-size:11.5px;line-height:11.5px;font-weight:400;font-style:normal;color:#878a99;transform:scaleX(0.9805);transform-origin:0 0;'>2%</div>
<div class='t' style='left:864.3px;top:694px;font-size:10px;line-height:10px;font-weight:700;font-style:italic;color:#878a99;transform:scaleX(0.9150);transform-origin:0 0;'>Last day by hours</div>
<div class='t' style='left:944.5px;top:694px;font-size:10px;line-height:10px;font-weight:700;font-style:normal;color:#878a99;'>•</div>
<div class='t' style='left:951.8px;top:694px;font-size:10px;line-height:10px;font-weight:400;font-style:italic;color:#6ad28a;transform:scaleX(0.9825);transform-origin:0 0;'>Currently Running</div>
<svg class="b" style="left:0;top:0" width="1226" height="716" viewBox="0 0 1226 716"><path d="M863 455.3 H1156" stroke="#008ffb" stroke-width="2.6"/><path d="M863.00 440 L864.50 440 C867.42 440 871.32 439.2 874.24 439.2 L877.24 439.2 C880.16 439.2 884.06 431.8 886.98 431.8 L889.98 431.8 C892.90 431.8 896.80 434.7 899.72 434.7 L902.72 434.7 C905.64 434.7 909.53 454 912.46 454 L915.46 454 C918.38 454 922.27 433.9 925.20 433.9 L928.20 433.9 C931.12 433.9 935.01 434 937.93 434 L940.93 434 C943.86 434 947.75 434 950.67 434 L953.67 434 C956.60 434 960.49 440 963.41 440 L966.41 440 C969.33 440 973.23 450 976.15 450 L979.15 450 C982.07 450 985.97 455.3 988.89 455.3 L991.89 455.3 C994.81 455.3 998.71 455.3 1001.63 455.3 L1004.63 455.3 C1007.55 455.3 1011.45 455.3 1014.37 455.3 L1017.37 455.3 C1020.29 455.3 1024.19 455.3 1027.11 455.3 L1030.11 455.3 C1033.03 455.3 1036.93 455.3 1039.85 455.3 L1042.85 455.3 C1045.77 455.3 1049.67 455.3 1052.59 455.3 L1055.59 455.3 C1058.51 455.3 1062.40 455.3 1065.33 455.3 L1068.33 455.3 C1071.25 455.3 1075.14 455.3 1078.07 455.3 L1081.07 455.3 C1083.99 455.3 1087.88 455.3 1090.80 455.3 L1093.80 455.3 C1096.73 455.3 1100.62 455.3 1103.54 455.3 L1106.54 455.3 C1109.47 455.3 1113.36 455.3 1116.28 455.3 L1119.28 455.3 C1122.20 455.3 1126.10 455.3 1129.02 455.3 L1132.02 455.3 C1134.94 455.3 1138.84 455.3 1141.76 455.3 L1144.76 455.3 C1147.68 455.3 1151.58 455.3 1154.50 455.3 L1156.00 455.3 L1156.00 455.3 L1154.50 455.3 C1151.58 455.3 1147.68 455.3 1144.76 455.3 L1141.76 455.3 C1138.84 455.3 1134.94 455.3 1132.02 455.3 L1129.02 455.3 C1126.10 455.3 1122.20 455.3 1119.28 455.3 L1116.28 455.3 C1113.36 455.3 1109.47 455.3 1106.54 455.3 L1103.54 455.3 C1100.62 455.3 1096.73 455.3 1093.80 455.3 L1090.80 455.3 C1087.88 455.3 1083.99 455.3 1081.07 455.3 L1078.07 455.3 C1075.14 455.3 1071.25 455.3 1068.33 455.3 L1065.33 455.3 C1062.40 455.3 1058.51 455.3 1055.59 455.3 L1052.59 455.3 C1049.67 455.3 1045.77 455.3 1042.85 455.3 L1039.85 455.3 C1036.93 455.3 1033.03 455.3 1030.11 455.3 L1027.11 455.3 C1024.19 455.3 1020.29 455.3 1017.37 455.3 L1014.37 455.3 C1011.45 455.3 1007.55 455.3 1004.63 455.3 L1001.63 455.3 C998.71 455.3 994.81 455.3 991.89 455.3 L988.89 455.3 C985.97 455.3 982.07 455 979.15 455 L976.15 455 C973.23 455 969.33 451 966.41 451 L963.41 451 C960.49 451 956.60 444.5 953.67 444.5 L950.67 444.5 C947.75 444.5 943.86 437 940.93 437 L937.93 437 C935.01 437 931.12 438.4 928.20 438.4 L925.20 438.4 C922.27 438.4 918.38 454 915.46 454 L912.46 454 C909.53 454 905.64 437.1 902.72 437.1 L899.72 437.1 C896.80 437.1 892.90 441.2 889.98 441.2 L886.98 441.2 C884.06 441.2 880.16 442.8 877.24 442.8 L874.24 442.8 C871.32 442.8 867.42 441.6 864.50 441.6 L863.00 441.6 Z" fill="#00e396" fill-opacity="0.55"/><path d="M863.00 440 L864.50 440 C867.42 440 871.32 439.2 874.24 439.2 L877.24 439.2 C880.16 439.2 884.06 431.8 886.98 431.8 L889.98 431.8 C892.90 431.8 896.80 434.7 899.72 434.7 L902.72 434.7 C905.64 434.7 909.53 454 912.46 454 L915.46 454 C918.38 454 922.27 433.9 925.20 433.9 L928.20 433.9 C931.12 433.9 935.01 434 937.93 434 L940.93 434 C943.86 434 947.75 434 950.67 434 L953.67 434 C956.60 434 960.49 440 963.41 440 L966.41 440 C969.33 440 973.23 450 976.15 450 L979.15 450 C982.07 450 985.97 455.3 988.89 455.3 L991.89 455.3 C994.81 455.3 998.71 455.3 1001.63 455.3 L1004.63 455.3 C1007.55 455.3 1011.45 455.3 1014.37 455.3 L1017.37 455.3 C1020.29 455.3 1024.19 455.3 1027.11 455.3 L1030.11 455.3 C1033.03 455.3 1036.93 455.3 1039.85 455.3 L1042.85 455.3 C1045.77 455.3 1049.67 455.3 1052.59 455.3 L1055.59 455.3 C1058.51 455.3 1062.40 455.3 1065.33 455.3 L1068.33 455.3 C1071.25 455.3 1075.14 455.3 1078.07 455.3 L1081.07 455.3 C1083.99 455.3 1087.88 455.3 1090.80 455.3 L1093.80 455.3 C1096.73 455.3 1100.62 455.3 1103.54 455.3 L1106.54 455.3 C1109.47 455.3 1113.36 455.3 1116.28 455.3 L1119.28 455.3 C1122.20 455.3 1126.10 455.3 1129.02 455.3 L1132.02 455.3 C1134.94 455.3 1138.84 455.3 1141.76 455.3 L1144.76 455.3 C1147.68 455.3 1151.58 455.3 1154.50 455.3 L1156.00 455.3" fill="none" stroke="#00e396" stroke-width="5" stroke-linecap="butt" stroke-linejoin="round"/><path d="M863.00 441.6 L864.50 441.6 C867.42 441.6 871.32 442.8 874.24 442.8 L877.24 442.8 C880.16 442.8 884.06 441.2 886.98 441.2 L889.98 441.2 C892.90 441.2 896.80 437.1 899.72 437.1 L902.72 437.1 C905.64 437.1 909.53 454 912.46 454 L915.46 454 C918.38 454 922.27 438.4 925.20 438.4 L928.20 438.4 C931.12 438.4 935.01 437 937.93 437 L940.93 437 C943.86 437 947.75 444.5 950.67 444.5 L953.67 444.5 C956.60 444.5 960.49 451 963.41 451 L966.41 451 C969.33 451 973.23 455 976.15 455 L979.15 455 C982.07 455 985.97 455.3 988.89 455.3 L991.89 455.3 C994.81 455.3 998.71 455.3 1001.63 455.3 L1004.63 455.3 C1007.55 455.3 1011.45 455.3 1014.37 455.3 L1017.37 455.3 C1020.29 455.3 1024.19 455.3 1027.11 455.3 L1030.11 455.3 C1033.03 455.3 1036.93 455.3 1039.85 455.3 L1042.85 455.3 C1045.77 455.3 1049.67 455.3 1052.59 455.3 L1055.59 455.3 C1058.51 455.3 1062.40 455.3 1065.33 455.3 L1068.33 455.3 C1071.25 455.3 1075.14 455.3 1078.07 455.3 L1081.07 455.3 C1083.99 455.3 1087.88 455.3 1090.80 455.3 L1093.80 455.3 C1096.73 455.3 1100.62 455.3 1103.54 455.3 L1106.54 455.3 C1109.47 455.3 1113.36 455.3 1116.28 455.3 L1119.28 455.3 C1122.20 455.3 1126.10 455.3 1129.02 455.3 L1132.02 455.3 C1134.94 455.3 1138.84 455.3 1141.76 455.3 L1144.76 455.3 C1147.68 455.3 1151.58 455.3 1154.50 455.3 L1156.00 455.3" fill="none" stroke="#00e396" stroke-width="5" stroke-linecap="butt" stroke-linejoin="round"/><path d="M863 532.2 H1156" stroke="#008ffb" stroke-width="2.6"/><path d="M863.00 517.0 L864.50 517.0 C867.42 517.0 871.32 517.2 874.24 517.2 L877.24 517.2 C880.16 517.2 884.06 518.2 886.98 518.2 L889.98 518.2 C892.90 518.2 896.80 519.1 899.72 519.1 L902.72 519.1 C905.64 519.1 909.53 531 912.46 531 L915.46 531 C918.38 531 922.27 519 925.20 519 L928.20 519 C931.12 519 935.01 519.1 937.93 519.1 L940.93 519.1 C943.86 519.1 947.75 517.2 950.67 517.2 L953.67 517.2 C956.60 517.2 960.49 516 963.41 516 L966.41 516 C969.33 516 973.23 514.8 976.15 514.8 L979.15 514.8 C982.07 514.8 985.97 513.3 988.89 513.3 L991.89 513.3 C994.81 513.3 998.71 514.2 1001.63 514.2 L1004.63 514.2 C1007.55 514.2 1011.45 517.2 1014.37 517.2 L1017.37 517.2 C1020.29 517.2 1024.19 516.6 1027.11 516.6 L1030.11 516.6 C1033.03 516.6 1036.93 517.6 1039.85 517.6 L1042.85 517.6 C1045.77 517.6 1049.67 518.8 1052.59 518.8 L1055.59 518.8 C1058.51 518.8 1062.40 518.2 1065.33 518.2 L1068.33 518.2 C1071.25 518.2 1075.14 517.8 1078.07 517.8 L1081.07 517.8 C1083.99 517.8 1087.88 517.8 1090.80 517.8 L1093.80 517.8 C1096.73 517.8 1100.62 517.8 1103.54 517.8 L1106.54 517.8 C1109.47 517.8 1113.36 516.9 1116.28 516.9 L1119.28 516.9 C1122.20 516.9 1126.10 518.2 1129.02 518.2 L1132.02 518.2 C1134.94 518.2 1138.84 517.8 1141.76 517.8 L1144.76 517.8 C1147.68 517.8 1151.58 517.8 1154.50 517.8 L1156.00 517.8 L1156.00 517.8 L1154.50 517.8 C1151.58 517.8 1147.68 517.8 1144.76 517.8 L1141.76 517.8 C1138.84 517.8 1134.94 519 1132.02 519 L1129.02 519 C1126.10 519 1122.20 518.2 1119.28 518.2 L1116.28 518.2 C1113.36 518.2 1109.47 517.8 1106.54 517.8 L1103.54 517.8 C1100.62 517.8 1096.73 517.8 1093.80 517.8 L1090.80 517.8 C1087.88 517.8 1083.99 517.8 1081.07 517.8 L1078.07 517.8 C1075.14 517.8 1071.25 518.2 1068.33 518.2 L1065.33 518.2 C1062.40 518.2 1058.51 518.8 1055.59 518.8 L1052.59 518.8 C1049.67 518.8 1045.77 517.6 1042.85 517.6 L1039.85 517.6 C1036.93 517.6 1033.03 518.2 1030.11 518.2 L1027.11 518.2 C1024.19 518.2 1020.29 518.8 1017.37 518.8 L1014.37 518.8 C1011.45 518.8 1007.55 519.1 1004.63 519.1 L1001.63 519.1 C998.71 519.1 994.81 515.8 991.89 515.8 L988.89 515.8 C985.97 515.8 982.07 517 979.15 517 L976.15 517 C973.23 517 969.33 517.8 966.41 517.8 L963.41 517.8 C960.49 517.8 956.60 518.5 953.67 518.5 L950.67 518.5 C947.75 518.5 943.86 519.9 940.93 519.9 L937.93 519.9 C935.01 519.9 931.12 519 928.20 519 L925.20 519 C922.27 519 918.38 531 915.46 531 L912.46 531 C909.53 531 905.64 519.1 902.72 519.1 L899.72 519.1 C896.80 519.1 892.90 519.9 889.98 519.9 L886.98 519.9 C884.06 519.9 880.16 519.1 877.24 519.1 L874.24 519.1 C871.32 519.1 867.42 518.2 864.50 518.2 L863.00 518.2 Z" fill="#00e396" fill-opacity="0.55"/><path d="M863.00 517.0 L864.50 517.0 C867.42 517.0 871.32 517.2 874.24 517.2 L877.24 517.2 C880.16 517.2 884.06 518.2 886.98 518.2 L889.98 518.2 C892.90 518.2 896.80 519.1 899.72 519.1 L902.72 519.1 C905.64 519.1 909.53 531 912.46 531 L915.46 531 C918.38 531 922.27 519 925.20 519 L928.20 519 C931.12 519 935.01 519.1 937.93 519.1 L940.93 519.1 C943.86 519.1 947.75 517.2 950.67 517.2 L953.67 517.2 C956.60 517.2 960.49 516 963.41 516 L966.41 516 C969.33 516 973.23 514.8 976.15 514.8 L979.15 514.8 C982.07 514.8 985.97 513.3 988.89 513.3 L991.89 513.3 C994.81 513.3 998.71 514.2 1001.63 514.2 L1004.63 514.2 C1007.55 514.2 1011.45 517.2 1014.37 517.2 L1017.37 517.2 C1020.29 517.2 1024.19 516.6 1027.11 516.6 L1030.11 516.6 C1033.03 516.6 1036.93 517.6 1039.85 517.6 L1042.85 517.6 C1045.77 517.6 1049.67 518.8 1052.59 518.8 L1055.59 518.8 C1058.51 518.8 1062.40 518.2 1065.33 518.2 L1068.33 518.2 C1071.25 518.2 1075.14 517.8 1078.07 517.8 L1081.07 517.8 C1083.99 517.8 1087.88 517.8 1090.80 517.8 L1093.80 517.8 C1096.73 517.8 1100.62 517.8 1103.54 517.8 L1106.54 517.8 C1109.47 517.8 1113.36 516.9 1116.28 516.9 L1119.28 516.9 C1122.20 516.9 1126.10 518.2 1129.02 518.2 L1132.02 518.2 C1134.94 518.2 1138.84 517.8 1141.76 517.8 L1144.76 517.8 C1147.68 517.8 1151.58 517.8 1154.50 517.8 L1156.00 517.8" fill="none" stroke="#00e396" stroke-width="5" stroke-linecap="butt" stroke-linejoin="round"/><path d="M863.00 518.2 L864.50 518.2 C867.42 518.2 871.32 519.1 874.24 519.1 L877.24 519.1 C880.16 519.1 884.06 519.9 886.98 519.9 L889.98 519.9 C892.90 519.9 896.80 519.1 899.72 519.1 L902.72 519.1 C905.64 519.1 909.53 531 912.46 531 L915.46 531 C918.38 531 922.27 519 925.20 519 L928.20 519 C931.12 519 935.01 519.9 937.93 519.9 L940.93 519.9 C943.86 519.9 947.75 518.5 950.67 518.5 L953.67 518.5 C956.60 518.5 960.49 517.8 963.41 517.8 L966.41 517.8 C969.33 517.8 973.23 517 976.15 517 L979.15 517 C982.07 517 985.97 515.8 988.89 515.8 L991.89 515.8 C994.81 515.8 998.71 519.1 1001.63 519.1 L1004.63 519.1 C1007.55 519.1 1011.45 518.8 1014.37 518.8 L1017.37 518.8 C1020.29 518.8 1024.19 518.2 1027.11 518.2 L1030.11 518.2 C1033.03 518.2 1036.93 517.6 1039.85 517.6 L1042.85 517.6 C1045.77 517.6 1049.67 518.8 1052.59 518.8 L1055.59 518.8 C1058.51 518.8 1062.40 518.2 1065.33 518.2 L1068.33 518.2 C1071.25 518.2 1075.14 517.8 1078.07 517.8 L1081.07 517.8 C1083.99 517.8 1087.88 517.8 1090.80 517.8 L1093.80 517.8 C1096.73 517.8 1100.62 517.8 1103.54 517.8 L1106.54 517.8 C1109.47 517.8 1113.36 518.2 1116.28 518.2 L1119.28 518.2 C1122.20 518.2 1126.10 519 1129.02 519 L1132.02 519 C1134.94 519 1138.84 517.8 1141.76 517.8 L1144.76 517.8 C1147.68 517.8 1151.58 517.8 1154.50 517.8 L1156.00 517.8" fill="none" stroke="#00e396" stroke-width="5" stroke-linecap="butt" stroke-linejoin="round"/><path d="M863 609.4 H1156" stroke="#008ffb" stroke-width="2.6"/><path d="M863.00 597.5 L864.50 597.5 C867.42 597.5 871.32 598.1 874.24 598.1 L877.24 598.1 C880.16 598.1 884.06 597.5 886.98 597.5 L889.98 597.5 C892.90 597.5 896.80 599.1 899.72 599.1 L902.72 599.1 C905.64 599.1 909.53 608 912.46 608 L915.46 608 C918.38 608 922.27 599.1 925.20 599.1 L928.20 599.1 C931.12 599.1 935.01 598.1 937.93 598.1 L940.93 598.1 C943.86 598.1 947.75 596 950.67 596 L953.67 596 C956.60 596 960.49 596.3 963.41 596.3 L966.41 596.3 C969.33 596.3 973.23 595.7 976.15 595.7 L979.15 595.7 C982.07 595.7 985.97 594.5 988.89 594.5 L991.89 594.5 C994.81 594.5 998.71 582.2 1001.63 582.2 L1004.63 582.2 C1007.55 582.2 1011.45 578.8 1014.37 578.8 L1017.37 578.8 C1020.29 578.8 1024.19 581.6 1027.11 581.6 L1030.11 581.6 C1033.03 581.6 1036.93 581.9 1039.85 581.9 L1042.85 581.9 C1045.77 581.9 1049.67 582.6 1052.59 582.6 L1055.59 582.6 C1058.51 582.6 1062.40 581.9 1065.33 581.9 L1068.33 581.9 C1071.25 581.9 1075.14 581.9 1078.07 581.9 L1081.07 581.9 C1083.99 581.9 1087.88 581.6 1090.80 581.6 L1093.80 581.6 C1096.73 581.6 1100.62 581.9 1103.54 581.9 L1106.54 581.9 C1109.47 581.9 1113.36 583.2 1116.28 583.2 L1119.28 583.2 C1122.20 583.2 1126.10 583.6 1129.02 583.6 L1132.02 583.6 C1134.94 583.6 1138.84 582.6 1141.76 582.6 L1144.76 582.6 C1147.68 582.6 1151.58 583.2 1154.50 583.2 L1156.00 583.2 L1156.00 583.2 L1154.50 583.2 C1151.58 583.2 1147.68 583.2 1144.76 583.2 L1141.76 583.2 C1138.84 583.2 1134.94 583.6 1132.02 583.6 L1129.02 583.6 C1126.10 583.6 1122.20 584.4 1119.28 584.4 L1116.28 584.4 C1113.36 584.4 1109.47 584.4 1106.54 584.4 L1103.54 584.4 C1100.62 584.4 1096.73 582.6 1093.80 582.6 L1090.80 582.6 C1087.88 582.6 1083.99 582.6 1081.07 582.6 L1078.07 582.6 C1075.14 582.6 1071.25 583.2 1068.33 583.2 L1065.33 583.2 C1062.40 583.2 1058.51 583.6 1055.59 583.6 L1052.59 583.6 C1049.67 583.6 1045.77 582.8 1042.85 582.8 L1039.85 582.8 C1036.93 582.8 1033.03 582.6 1030.11 582.6 L1027.11 582.6 C1024.19 582.6 1020.29 583.2 1017.37 583.2 L1014.37 583.2 C1011.45 583.2 1007.55 598.1 1004.63 598.1 L1001.63 598.1 C998.71 598.1 994.81 596.9 991.89 596.9 L988.89 596.9 C985.97 596.9 982.07 597.5 979.15 597.5 L976.15 597.5 C973.23 597.5 969.33 598.4 966.41 598.4 L963.41 598.4 C960.49 598.4 956.60 599.1 953.67 599.1 L950.67 599.1 C947.75 599.1 943.86 599.4 940.93 599.4 L937.93 599.4 C935.01 599.4 931.12 600 928.20 600 L925.20 600 C922.27 600 918.38 608 915.46 608 L912.46 608 C909.53 608 905.64 599.1 902.72 599.1 L899.72 599.1 C896.80 599.1 892.90 599.6 889.98 599.6 L886.98 599.6 C884.06 599.6 880.16 600.3 877.24 600.3 L874.24 600.3 C871.32 600.3 867.42 598.8 864.50 598.8 L863.00 598.8 Z" fill="#00e396" fill-opacity="0.55"/><path d="M863.00 597.5 L864.50 597.5 C867.42 597.5 871.32 598.1 874.24 598.1 L877.24 598.1 C880.16 598.1 884.06 597.5 886.98 597.5 L889.98 597.5 C892.90 597.5 896.80 599.1 899.72 599.1 L902.72 599.1 C905.64 599.1 909.53 608 912.46 608 L915.46 608 C918.38 608 922.27 599.1 925.20 599.1 L928.20 599.1 C931.12 599.1 935.01 598.1 937.93 598.1 L940.93 598.1 C943.86 598.1 947.75 596 950.67 596 L953.67 596 C956.60 596 960.49 596.3 963.41 596.3 L966.41 596.3 C969.33 596.3 973.23 595.7 976.15 595.7 L979.15 595.7 C982.07 595.7 985.97 594.5 988.89 594.5 L991.89 594.5 C994.81 594.5 998.71 582.2 1001.63 582.2 L1004.63 582.2 C1007.55 582.2 1011.45 578.8 1014.37 578.8 L1017.37 578.8 C1020.29 578.8 1024.19 581.6 1027.11 581.6 L1030.11 581.6 C1033.03 581.6 1036.93 581.9 1039.85 581.9 L1042.85 581.9 C1045.77 581.9 1049.67 582.6 1052.59 582.6 L1055.59 582.6 C1058.51 582.6 1062.40 581.9 1065.33 581.9 L1068.33 581.9 C1071.25 581.9 1075.14 581.9 1078.07 581.9 L1081.07 581.9 C1083.99 581.9 1087.88 581.6 1090.80 581.6 L1093.80 581.6 C1096.73 581.6 1100.62 581.9 1103.54 581.9 L1106.54 581.9 C1109.47 581.9 1113.36 583.2 1116.28 583.2 L1119.28 583.2 C1122.20 583.2 1126.10 583.6 1129.02 583.6 L1132.02 583.6 C1134.94 583.6 1138.84 582.6 1141.76 582.6 L1144.76 582.6 C1147.68 582.6 1151.58 583.2 1154.50 583.2 L1156.00 583.2" fill="none" stroke="#00e396" stroke-width="5" stroke-linecap="butt" stroke-linejoin="round"/><path d="M863.00 598.8 L864.50 598.8 C867.42 598.8 871.32 600.3 874.24 600.3 L877.24 600.3 C880.16 600.3 884.06 599.6 886.98 599.6 L889.98 599.6 C892.90 599.6 896.80 599.1 899.72 599.1 L902.72 599.1 C905.64 599.1 909.53 608 912.46 608 L915.46 608 C918.38 608 922.27 600 925.20 600 L928.20 600 C931.12 600 935.01 599.4 937.93 599.4 L940.93 599.4 C943.86 599.4 947.75 599.1 950.67 599.1 L953.67 599.1 C956.60 599.1 960.49 598.4 963.41 598.4 L966.41 598.4 C969.33 598.4 973.23 597.5 976.15 597.5 L979.15 597.5 C982.07 597.5 985.97 596.9 988.89 596.9 L991.89 596.9 C994.81 596.9 998.71 598.1 1001.63 598.1 L1004.63 598.1 C1007.55 598.1 1011.45 583.2 1014.37 583.2 L1017.37 583.2 C1020.29 583.2 1024.19 582.6 1027.11 582.6 L1030.11 582.6 C1033.03 582.6 1036.93 582.8 1039.85 582.8 L1042.85 582.8 C1045.77 582.8 1049.67 583.6 1052.59 583.6 L1055.59 583.6 C1058.51 583.6 1062.40 583.2 1065.33 583.2 L1068.33 583.2 C1071.25 583.2 1075.14 582.6 1078.07 582.6 L1081.07 582.6 C1083.99 582.6 1087.88 582.6 1090.80 582.6 L1093.80 582.6 C1096.73 582.6 1100.62 584.4 1103.54 584.4 L1106.54 584.4 C1109.47 584.4 1113.36 584.4 1116.28 584.4 L1119.28 584.4 C1122.20 584.4 1126.10 583.6 1129.02 583.6 L1132.02 583.6 C1134.94 583.6 1138.84 583.2 1141.76 583.2 L1144.76 583.2 C1147.68 583.2 1151.58 583.2 1154.50 583.2 L1156.00 583.2" fill="none" stroke="#00e396" stroke-width="5" stroke-linecap="butt" stroke-linejoin="round"/><path d="M863 686.3 H1156" stroke="#008ffb" stroke-width="2.6"/><path d="M863.00 673.4 L864.50 673.4 C867.42 673.4 871.32 667 874.24 667 L877.24 667 C880.16 667 884.06 667 886.98 667 L889.98 667 C892.90 667 896.80 673.4 899.72 673.4 L902.72 673.4 C905.64 673.4 909.53 685 912.46 685 L915.46 685 C918.38 685 922.27 673.4 925.20 673.4 L928.20 673.4 C931.12 673.4 935.01 673.4 937.93 673.4 L940.93 673.4 C943.86 673.4 947.75 655 950.67 655 L953.67 655 C956.60 655 960.49 673.4 963.41 673.4 L966.41 673.4 C969.33 673.4 973.23 673.4 976.15 673.4 L979.15 673.4 C982.07 673.4 985.97 673.4 988.89 673.4 L991.89 673.4 C994.81 673.4 998.71 666.6 1001.63 666.6 L1004.63 666.6 C1007.55 666.6 1011.45 666.6 1014.37 666.6 L1017.37 666.6 C1020.29 666.6 1024.19 666.6 1027.11 666.6 L1030.11 666.6 C1033.03 666.6 1036.93 666.6 1039.85 666.6 L1042.85 666.6 C1045.77 666.6 1049.67 666.6 1052.59 666.6 L1055.59 666.6 C1058.51 666.6 1062.40 666.6 1065.33 666.6 L1068.33 666.6 C1071.25 666.6 1075.14 666.6 1078.07 666.6 L1081.07 666.6 C1083.99 666.6 1087.88 666.6 1090.80 666.6 L1093.80 666.6 C1096.73 666.6 1100.62 666.6 1103.54 666.6 L1106.54 666.6 C1109.47 666.6 1113.36 666.6 1116.28 666.6 L1119.28 666.6 C1122.20 666.6 1126.10 666.6 1129.02 666.6 L1132.02 666.6 C1134.94 666.6 1138.84 666.6 1141.76 666.6 L1144.76 666.6 C1147.68 666.6 1151.58 666.6 1154.50 666.6 L1156.00 666.6 L1156.00 666.6 L1154.50 666.6 C1151.58 666.6 1147.68 666.6 1144.76 666.6 L1141.76 666.6 C1138.84 666.6 1134.94 673 1132.02 673 L1129.02 673 C1126.10 673 1122.20 666.6 1119.28 666.6 L1116.28 666.6 C1113.36 666.6 1109.47 666.6 1106.54 666.6 L1103.54 666.6 C1100.62 666.6 1096.73 666.6 1093.80 666.6 L1090.80 666.6 C1087.88 666.6 1083.99 666.6 1081.07 666.6 L1078.07 666.6 C1075.14 666.6 1071.25 673 1068.33 673 L1065.33 673 C1062.40 673 1058.51 673 1055.59 673 L1052.59 673 C1049.67 673 1045.77 666.6 1042.85 666.6 L1039.85 666.6 C1036.93 666.6 1033.03 666.6 1030.11 666.6 L1027.11 666.6 C1024.19 666.6 1020.29 673 1017.37 673 L1014.37 673 C1011.45 673 1007.55 673 1004.63 673 L1001.63 673 C998.71 673 994.81 673.4 991.89 673.4 L988.89 673.4 C985.97 673.4 982.07 673.4 979.15 673.4 L976.15 673.4 C973.23 673.4 969.33 673.4 966.41 673.4 L963.41 673.4 C960.49 673.4 956.60 673.4 953.67 673.4 L950.67 673.4 C947.75 673.4 943.86 673.4 940.93 673.4 L937.93 673.4 C935.01 673.4 931.12 673.4 928.20 673.4 L925.20 673.4 C922.27 673.4 918.38 685 915.46 685 L912.46 685 C909.53 685 905.64 673.4 902.72 673.4 L899.72 673.4 C896.80 673.4 892.90 673.4 889.98 673.4 L886.98 673.4 C884.06 673.4 880.16 673.4 877.24 673.4 L874.24 673.4 C871.32 673.4 867.42 673.4 864.50 673.4 L863.00 673.4 Z" fill="#00e396" fill-opacity="0.55"/><path d="M863.00 673.4 L864.50 673.4 C867.42 673.4 871.32 667 874.24 667 L877.24 667 C880.16 667 884.06 667 886.98 667 L889.98 667 C892.90 667 896.80 673.4 899.72 673.4 L902.72 673.4 C905.64 673.4 909.53 685 912.46 685 L915.46 685 C918.38 685 922.27 673.4 925.20 673.4 L928.20 673.4 C931.12 673.4 935.01 673.4 937.93 673.4 L940.93 673.4 C943.86 673.4 947.75 655 950.67 655 L953.67 655 C956.60 655 960.49 673.4 963.41 673.4 L966.41 673.4 C969.33 673.4 973.23 673.4 976.15 673.4 L979.15 673.4 C982.07 673.4 985.97 673.4 988.89 673.4 L991.89 673.4 C994.81 673.4 998.71 666.6 1001.63 666.6 L1004.63 666.6 C1007.55 666.6 1011.45 666.6 1014.37 666.6 L1017.37 666.6 C1020.29 666.6 1024.19 666.6 1027.11 666.6 L1030.11 666.6 C1033.03 666.6 1036.93 666.6 1039.85 666.6 L1042.85 666.6 C1045.77 666.6 1049.67 666.6 1052.59 666.6 L1055.59 666.6 C1058.51 666.6 1062.40 666.6 1065.33 666.6 L1068.33 666.6 C1071.25 666.6 1075.14 666.6 1078.07 666.6 L1081.07 666.6 C1083.99 666.6 1087.88 666.6 1090.80 666.6 L1093.80 666.6 C1096.73 666.6 1100.62 666.6 1103.54 666.6 L1106.54 666.6 C1109.47 666.6 1113.36 666.6 1116.28 666.6 L1119.28 666.6 C1122.20 666.6 1126.10 666.6 1129.02 666.6 L1132.02 666.6 C1134.94 666.6 1138.84 666.6 1141.76 666.6 L1144.76 666.6 C1147.68 666.6 1151.58 666.6 1154.50 666.6 L1156.00 666.6" fill="none" stroke="#00e396" stroke-width="5" stroke-linecap="butt" stroke-linejoin="round"/><path d="M863.00 673.4 L864.50 673.4 C867.42 673.4 871.32 673.4 874.24 673.4 L877.24 673.4 C880.16 673.4 884.06 673.4 886.98 673.4 L889.98 673.4 C892.90 673.4 896.80 673.4 899.72 673.4 L902.72 673.4 C905.64 673.4 909.53 685 912.46 685 L915.46 685 C918.38 685 922.27 673.4 925.20 673.4 L928.20 673.4 C931.12 673.4 935.01 673.4 937.93 673.4 L940.93 673.4 C943.86 673.4 947.75 673.4 950.67 673.4 L953.67 673.4 C956.60 673.4 960.49 673.4 963.41 673.4 L966.41 673.4 C969.33 673.4 973.23 673.4 976.15 673.4 L979.15 673.4 C982.07 673.4 985.97 673.4 988.89 673.4 L991.89 673.4 C994.81 673.4 998.71 673 1001.63 673 L1004.63 673 C1007.55 673 1011.45 673 1014.37 673 L1017.37 673 C1020.29 673 1024.19 666.6 1027.11 666.6 L1030.11 666.6 C1033.03 666.6 1036.93 666.6 1039.85 666.6 L1042.85 666.6 C1045.77 666.6 1049.67 673 1052.59 673 L1055.59 673 C1058.51 673 1062.40 673 1065.33 673 L1068.33 673 C1071.25 673 1075.14 666.6 1078.07 666.6 L1081.07 666.6 C1083.99 666.6 1087.88 666.6 1090.80 666.6 L1093.80 666.6 C1096.73 666.6 1100.62 666.6 1103.54 666.6 L1106.54 666.6 C1109.47 666.6 1113.36 666.6 1116.28 666.6 L1119.28 666.6 C1122.20 666.6 1126.10 673 1129.02 673 L1132.02 673 C1134.94 673 1138.84 666.6 1141.76 666.6 L1144.76 666.6 C1147.68 666.6 1151.58 666.6 1154.50 666.6 L1156.00 666.6" fill="none" stroke="#00e396" stroke-width="5" stroke-linecap="butt" stroke-linejoin="round"/><path d="M939.4 421 V455" stroke="#c4c4c4" stroke-width="1.2" stroke-dasharray="3 3"/><circle cx="939.4" cy="434" r="4.3" fill="#00e396" stroke="#ffffff" stroke-width="1.5"/><circle cx="939.4" cy="456" r="3.6" fill="#008ffb"/></svg>
<div class='b' style='left:951.8px;top:423.8px;width:136.20000000000005px;height:46.19999999999999px;background:rgba(255,255,255,0.97);border:1px solid #e3e3e3;border-radius:5px;box-shadow:2px 2px 6px -4px #999;'></div>
<div class='t' style='left:959.6px;top:432px;font-size:11.5px;line-height:11.5px;font-weight:700;font-style:normal;color:#00e396;transform:scaleX(0.9776);transform-origin:0 0;'>RAM Range: 0%-29%:</div>
<div class='t' style='left:959.6px;top:452px;font-size:11.5px;line-height:11.5px;font-weight:700;font-style:normal;color:#64676f;transform:scaleX(1.0233);transform-origin:0 0;'>04-08-2025 14: <span style="font-weight:400;color:#80838f">22 - 29</span></div>
<div class='b' style='left:838px;top:58px;width:256px;height:250.5px;background:#ffffff;border-radius:4px;box-shadow:0 5px 10px rgba(30,32,37,0.12);'></div>
<div class='b' style='left:838px;top:58px;width:256px;height:106px;background:#5fa3cc;border-radius:4px 4px 0 0;'></div>
<div class='t' style='left:850.8px;top:72px;font-size:13px;line-height:13px;font-weight:700;font-style:normal;color:#ffffff;transform:scaleX(0.9653);transform-origin:0 0;'>Notifications</div>
<div class='b' style='left:1029px;top:71px;width:52px;height:17px;background:#f8f9fa;border-radius:3px;'></div>
<div class='t' style='left:1035.8px;top:74px;font-size:10px;line-height:10px;font-weight:700;font-style:normal;color:#343a40;transform:scaleX(1.0107);transform-origin:0 0;'>View All</div>
<div class='b' style='left:840.5px;top:95px;width:251.0px;height:22px;background:#ffffff;border-radius:3px;'></div>
<div class='b' style='left:841.5px;top:96px;width:249.0px;height:20px;border:2.2px solid #000000;border-radius:3px;'></div>
<div class='t' style='left:852.6px;top:100px;font-size:12px;line-height:12px;font-weight:400;font-style:normal;color:#2b2f33;transform:scaleX(0.9232);transform-origin:0 0;'>&quot;edge high ram&quot;</div>
<div class='b' style='left:845px;top:135px;width:119px;height:29px;background:#ffffff;border-radius:4px 4px 0 0;'></div>
<div class='t' style='left:857.8px;top:144px;font-size:12px;line-height:12px;font-weight:400;font-style:normal;color:#5fa3cc;transform:scaleX(0.9390);transform-origin:0 0;'>Most Recent (653)</div>
<div class='t' style='left:977.0px;top:144px;font-size:12px;line-height:12px;font-weight:700;font-style:normal;color:rgba(255,255,255,0.62);transform:scaleX(0.8630);transform-origin:0 0;'>By Category</div>
<div class='b' style='left:857px;top:180px;width:26px;height:26px;background:#fef4e4;border-radius:50%;'></div>
<svg class='b' style='left:863px;top:186px;' width='14' height='14' viewBox='0 0 14 14'><circle cx="7" cy="7" r="5.6" fill="none" stroke="#f7b84b" stroke-width="1.3"/><circle cx="7" cy="7" r="2.3" fill="none" stroke="#f7b84b" stroke-width="1.3"/><path d="M7 4.7 H12.2 M5 8.2 L2.5 3.6 M9 8.2 L6.4 12.6" stroke="#f7b84b" stroke-width="1.2"/></svg>
<div class='t' style='left:896.4px;top:182px;font-size:12px;line-height:12px;font-weight:700;font-style:normal;color:#495057;transform:scaleX(0.8546);transform-origin:0 0;'>REDACTED Edge high RAM</div>
<div class='t' style='left:896.2px;top:205px;font-size:11px;line-height:11px;font-weight:700;font-style:normal;color:#5fa3cc;transform:scaleX(0.8840);transform-origin:0 0;'>Details...</div>
<svg class='b' style='left:896px;top:224.5px;' width='9' height='9' viewBox='0 0 9 9'><circle cx="4.5" cy="4.5" r="3.8" fill="none" stroke="#878a99" stroke-width="1"/><path d="M4.5 2.3 V4.7 L6.2 5.8" fill="none" stroke="#878a99" stroke-width="0.9"/></svg>
<div class='t' style='left:904.5px;top:224px;font-size:10px;line-height:10px;font-weight:700;font-style:normal;color:#878a99;transform:scaleX(0.9046);transform-origin:0 0;'>2025-07-21, 03:41 P.M. MDT</div>
<div class='b' style='left:892px;top:258px;width:148px;height:32px;background:#e6f6ea;border-radius:4px;'></div>
<div class='t' style='left:904.6px;top:267px;font-size:12px;line-height:12px;font-weight:700;font-style:normal;color:#6ad28a;transform:scaleX(0.8916);transform-origin:0 0;'>View All Notifications</div>
<svg class='b' style='left:1017px;top:268.5px;' width='10' height='10' viewBox='0 0 10 10'><path d="M1.5 5 H8.5 M5.2 1.8 L8.5 5 L5.2 8.2" fill="none" stroke="#6ad28a" stroke-width="1.5"/></svg>
</body></html>
